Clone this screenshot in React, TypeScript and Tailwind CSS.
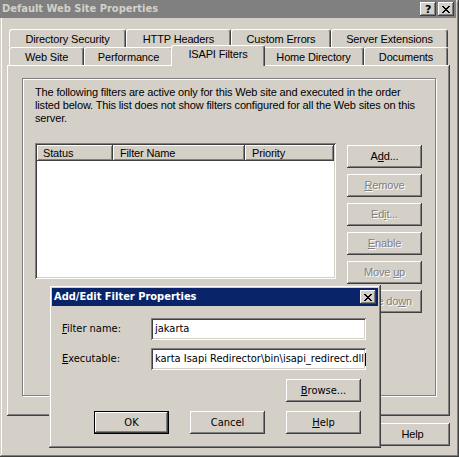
import React from "react";
import clsx from "clsx";

const raised =
  "shadow-[inset_-1px_-1px_#404040,inset_1px_1px_#ffffff,inset_-2px_-2px_#808080,inset_2px_2px_#d4d0c8]";
const sunken =
  "shadow-[inset_1px_1px_#808080,inset_-1px_-1px_#ffffff,inset_2px_2px_#404040,inset_-2px_-2px_#d4d0c8]";
const winFrame =
  "shadow-[inset_-1px_-1px_#404040,inset_1px_1px_#d4d0c8,inset_-2px_-2px_#808080,inset_2px_2px_#ffffff]";
const dlgFont = "font-['DejaVu_Sans_Condensed','DejaVu_Sans',sans-serif] tracking-normal";

type BtnProps = {
  children: React.ReactNode;
  disabled?: boolean;
  isDefault?: boolean;
  className?: string;
};

function Btn({ children, disabled, isDefault, className }: BtnProps) {
  return (
    <div
      className={clsx(
        "flex h-[23px] w-[75px] shrink-0 items-center justify-center bg-[#d4d0c8] leading-none",
        isDefault ? "border border-black" : "",
        raised,
        disabled && "text-[#808080] [text-shadow:1px_1px_0_#ffffff]",
        className
      )}
    >
      <span>{children}</span>
    </div>
  );
}

function CaptionBtn({ children }: { children: React.ReactNode }) {
  return (
    <div
      className={clsx(
        "flex h-[14px] w-[16px] items-center justify-center bg-[#d4d0c8] text-black",
        raised
      )}
    >
      {children}
    </div>
  );
}

function CloseGlyph() {
  return (
    <svg width="8" height="7" viewBox="0 0 8 7" shapeRendering="crispEdges">
      <path
        d="M0 0h2v1h-2zM6 0h2v1h-2zM1 1h2v1h-2zM5 1h2v1h-2zM2 2h4v1h-4zM3 3h2v1h-2zM2 4h4v1h-4zM1 5h2v1h-2zM5 5h2v1h-2zM0 6h2v1h-2zM6 6h2v1h-2z"
        fill="#000"
      />
    </svg>
  );
}

const backTabs: [string, string][] = [
  ["Directory Security", "w-[117px]"],
  ["HTTP Headers", "w-[105px]"],
  ["Custom Errors", "w-[100px]"],
  ["Server Extensions", "w-[117px]"],
];

function Tab({ label, width, selected }: { label: string; width: string; selected?: boolean }) {
  return (
    <div
      className={clsx(
        "flex items-center justify-center rounded-t-[3px] border-l border-t border-r border-l-white border-t-white border-r-[#404040] bg-[#d4d0c8] shadow-[inset_-1px_0_#808080]",
        selected ? "relative z-10 -mx-[2px] -mt-[2px] h-[21px] pb-[3px]" : "h-[18px] pt-[1px]",
        width
      )}
    >
      {label}
    </div>
  );
}

function Field({ children }: { children: React.ReactNode }) {
  return (
    <div
      className={clsx(
        "flex h-[22px] w-[215px] items-center overflow-hidden whitespace-nowrap bg-white pl-[4px] text-black",
        sunken
      )}
    >
      {children}
    </div>
  );
}

export default function App() {
  return (
    <div
      className={clsx(
        "relative h-[457px] w-[459px] overflow-hidden bg-[#d4d0c8] font-['Liberation_Sans',Arial,sans-serif] text-[11px] tracking-[-0.15px] text-black",
        winFrame
      )}
    >
      {/* title bar (inactive) */}
      <div className="flex h-[18px] w-[456px] items-center justify-between bg-[#808080] pl-[2px] pr-[2px]">
        <span className={clsx(dlgFont, "text-[11px] font-bold text-[#d4d0c8]")}>
          Default Web Site Properties
        </span>
        <div className="flex gap-[2px]">
          <CaptionBtn>
            <span className="font-['DejaVu_Sans',sans-serif] text-[11px] font-bold leading-none">?</span>
          </CaptionBtn>
          <CaptionBtn>
            <CloseGlyph />
          </CaptionBtn>
        </div>
      </div>

      <div className="pl-[7px] pt-[11px]">
        {/* tab rows */}
        <div className="ml-[2px] flex h-[18px]">
          {backTabs.map(([l, w]) => (
            <Tab key={l} label={l} width={w} />
          ))}
        </div>
        <div className="ml-[2px] flex h-[18px] items-start">
          <Tab label="Web Site" width="w-[75px]" />
          <Tab label="Performance" width="w-[89px]" />
          <Tab label="ISAPI Filters" width="w-[94px]" selected />
          <Tab label="Home Directory" width="w-[101px]" />
          <Tab label="Documents" width="w-[84px]" />
        </div>

        {/* tab panel */}
        <div className={clsx("h-[351px] w-[443px] bg-[#d4d0c8] pl-[15px] pt-[13px]", raised)}>
          <div className="h-[318px] w-[414px] border border-[#808080] shadow-[inset_1px_1px_#ffffff,1px_1px_#ffffff]">
            <p className="whitespace-nowrap pl-[12px] pt-[7px] leading-[13px]">
              The following filters are active only for this Web site and executed in the order
              <br />
              listed below. This list does not show filters configured for all the Web sites on this
              <br />
              server.
            </p>
            <div className="mt-[18px] flex pl-[12px]">
              <div className={clsx("h-[136px] w-[301px] bg-white p-[2px]", sunken)}>
                <div className="flex h-[16px]">
                  <div className={clsx("flex w-[76px] items-center bg-[#d4d0c8] pl-[6px]", raised)}>Status</div>
                  <div className={clsx("flex w-[132px] items-center bg-[#d4d0c8] pl-[7px]", raised)}>
                    Filter Name
                  </div>
                  <div className={clsx("flex w-[89px] items-center bg-[#d4d0c8] pl-[7px]", raised)}>Priority</div>
                  <div className={clsx("flex-1 bg-[#d4d0c8]", raised)} />
                </div>
              </div>
              <div className="ml-[11px] mt-[2px] flex flex-col gap-[6px]">
                <Btn>
                  A<u>d</u>d...
                </Btn>
                <Btn disabled>
                  <u>R</u>emove
                </Btn>
                <Btn disabled>
                  Ed<u>i</u>t...
                </Btn>
                <Btn disabled>
                  <u>E</u>nable
                </Btn>
                <Btn disabled>
                  Move <u>u</u>p
                </Btn>
                <Btn disabled>
                  Move do<u>w</u>n
                </Btn>
              </div>
            </div>
          </div>
        </div>

        {/* sheet buttons */}
        <div className="mt-[7px] flex w-[443px] justify-end gap-[6px]">
          <Btn isDefault>OK</Btn>
          <Btn>Cancel</Btn>
          <Btn disabled>Apply</Btn>
          <Btn>Help</Btn>
        </div>
      </div>

      {/* floating dialog */}
      <div
        className={clsx(
          "absolute left-[49px] top-[285px] h-[163px] w-[332px] bg-[#d4d0c8] p-[3px] text-[11px]",
          dlgFont,
          winFrame
        )}
      >
        <div className="flex h-[18px] items-center justify-between bg-[#0a246a] pl-[2px] pr-[2px]">
          <span className="font-bold text-white">Add/Edit Filter Properties</span>
          <CaptionBtn>
            <CloseGlyph />
          </CaptionBtn>
        </div>
        <div className="pl-[10px]">
          <div className="mt-[12px] flex items-center">
            <span className="w-[89px]">
              <u>F</u>ilter name:
            </span>
            <Field>jakarta</Field>
          </div>
          <div className="mt-[8px] flex items-center">
            <span className="w-[89px]">
              <u>E</u>xecutable:
            </span>
            <Field>
              <span>karta Isapi Redirector\bin\isapi_redirect.dll</span>
              <span className="ml-[1px] inline-block h-[13px] w-[1px] shrink-0 bg-black" />
            </Field>
          </div>
          <div className="mt-[9px] flex w-[299px] justify-end">
            <Btn>
              <u>B</u>rowse...
            </Btn>
          </div>
          <div className="mt-[9px] flex gap-[21px] pl-[32px]">
            <Btn isDefault>OK</Btn>
            <Btn>Cancel</Btn>
            <Btn>
              <u>H</u>elp
            </Btn>
          </div>
        </div>
      </div>
    </div>
  );
}
